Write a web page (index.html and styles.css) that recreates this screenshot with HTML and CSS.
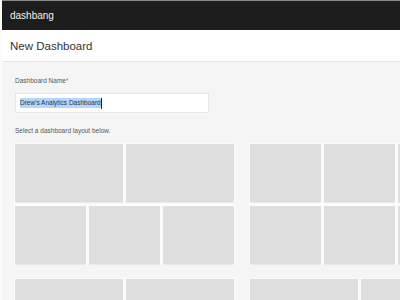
FILE: index.html
```html
<!DOCTYPE html>
<html lang="en">
<head>
    <meta charset="UTF-8">
    <title>dashbang - New Dashboard</title>
    <link rel="stylesheet" href="styles.css">
</head>
<body>

    <!-- Top bar -->
    <div class="topbar">dashbang</div>

    <!-- Page header -->
    <div class="page-header">
        <h1>New Dashboard</h1>
    </div>

    <div class="content">
        <label class="field-label">Dashboard Name<span class="required">*</span></label>
        <div class="text-input">
            <span class="selected">Drew's Analytics Dashboard</span><span class="caret"></span>
        </div>

        <p class="hint">Select a dashboard layout below.</p>

        <div class="layouts">
            <div class="layout">
                <div class="layout-row cols-2">
                    <div class="cell"></div>
                    <div class="cell"></div>
                </div>
                <div class="layout-row cols-3">
                    <div class="cell"></div>
                    <div class="cell"></div>
                    <div class="cell"></div>
                </div>
            </div>
            <div class="layout">
                <div class="layout-row cols-3">
                    <div class="cell"></div>
                    <div class="cell"></div>
                    <div class="cell"></div>
                </div>
                <div class="layout-row cols-3">
                    <div class="cell"></div>
                    <div class="cell"></div>
                    <div class="cell"></div>
                </div>
            </div>
        </div>

        <div class="layouts second">
            <div class="layout">
                <div class="layout-row cols-2">
                    <div class="cell"></div>
                    <div class="cell"></div>
                </div>
            </div>
            <div class="layout">
                <div class="layout-row cols-2">
                    <div class="cell"></div>
                    <div class="cell"></div>
                </div>
            </div>
        </div>
    </div>

</body>
</html>
```

FILE: styles.css
```css
/* General styling */
body {
    margin: 0;
    width: 400px;
    height: 300px;
    overflow: hidden;
    font-family: 'Liberation Sans', Arial, sans-serif;
    background: #f5f5f5;
    color: #333;
    border-left: 2px solid #fbfbfb;
    box-sizing: border-box;
}

.topbar {
    height: 29px;
    border-top: 1px solid #8a8a8a;
    background-color: #1d1d1d;
    color: #f2f2f2;
    font-size: 10px;
    line-height: 29px;
    padding-left: 8px;
}

.page-header {
    height: 31px;
    background-color: #ffffff;
    border-bottom: 1px solid #e6e6e6;
    display: flex;
    align-items: center;
    padding-left: 8px;
}

.page-header h1 {
    margin: 0;
    font-size: 11.5px;
    font-weight: normal;
    color: #333;
}

.content {
    padding: 14px 0 0 12px;
    overflow: hidden;
}

.field-label {
    display: block;
    padding-left: 1px;
    font-size: 6.5px;
    line-height: 10px;
    color: #555;
}

.required {
    color: #d9534f;
}

.text-input {
    margin: 7px 0 0 1px;
    width: 188px;
    height: 18px;
    background-color: #ffffff;
    border: 1px solid #e6e6e6;
    display: flex;
    align-items: center;
    padding-left: 4px;
    font-size: 6.5px;
    color: #333;
}

.selected {
    background-color: #b4d5fd;
    line-height: 10px;
}

.caret {
    width: 1px;
    height: 11px;
    background-color: #222;
}

.hint {
    margin: 13px 0 0 1px;
    font-size: 6.5px;
    line-height: 10px;
    color: #555;
}

/* Layout pickers */
.layouts {
    display: flex;
    gap: 14px;
    margin-top: 7px;
    width: 500px;
}

.layouts.second {
    margin-top: 13px;
}

.layout {
    width: 219px;
    flex-shrink: 0;
    background-color: #fbfbfb;
    padding: 1px;
    display: flex;
    flex-direction: column;
    gap: 4px;
}

.layout-row {
    display: grid;
    gap: 3px;
    height: 58px;
}

.cols-2 {
    grid-template-columns: 1fr 1fr;
}

.cols-3 {
    grid-template-columns: 1fr 1fr 1fr;
}

.cell {
    background-color: #dedede;
    box-shadow: 0 1px 0 #e9e9e9;
}
```
